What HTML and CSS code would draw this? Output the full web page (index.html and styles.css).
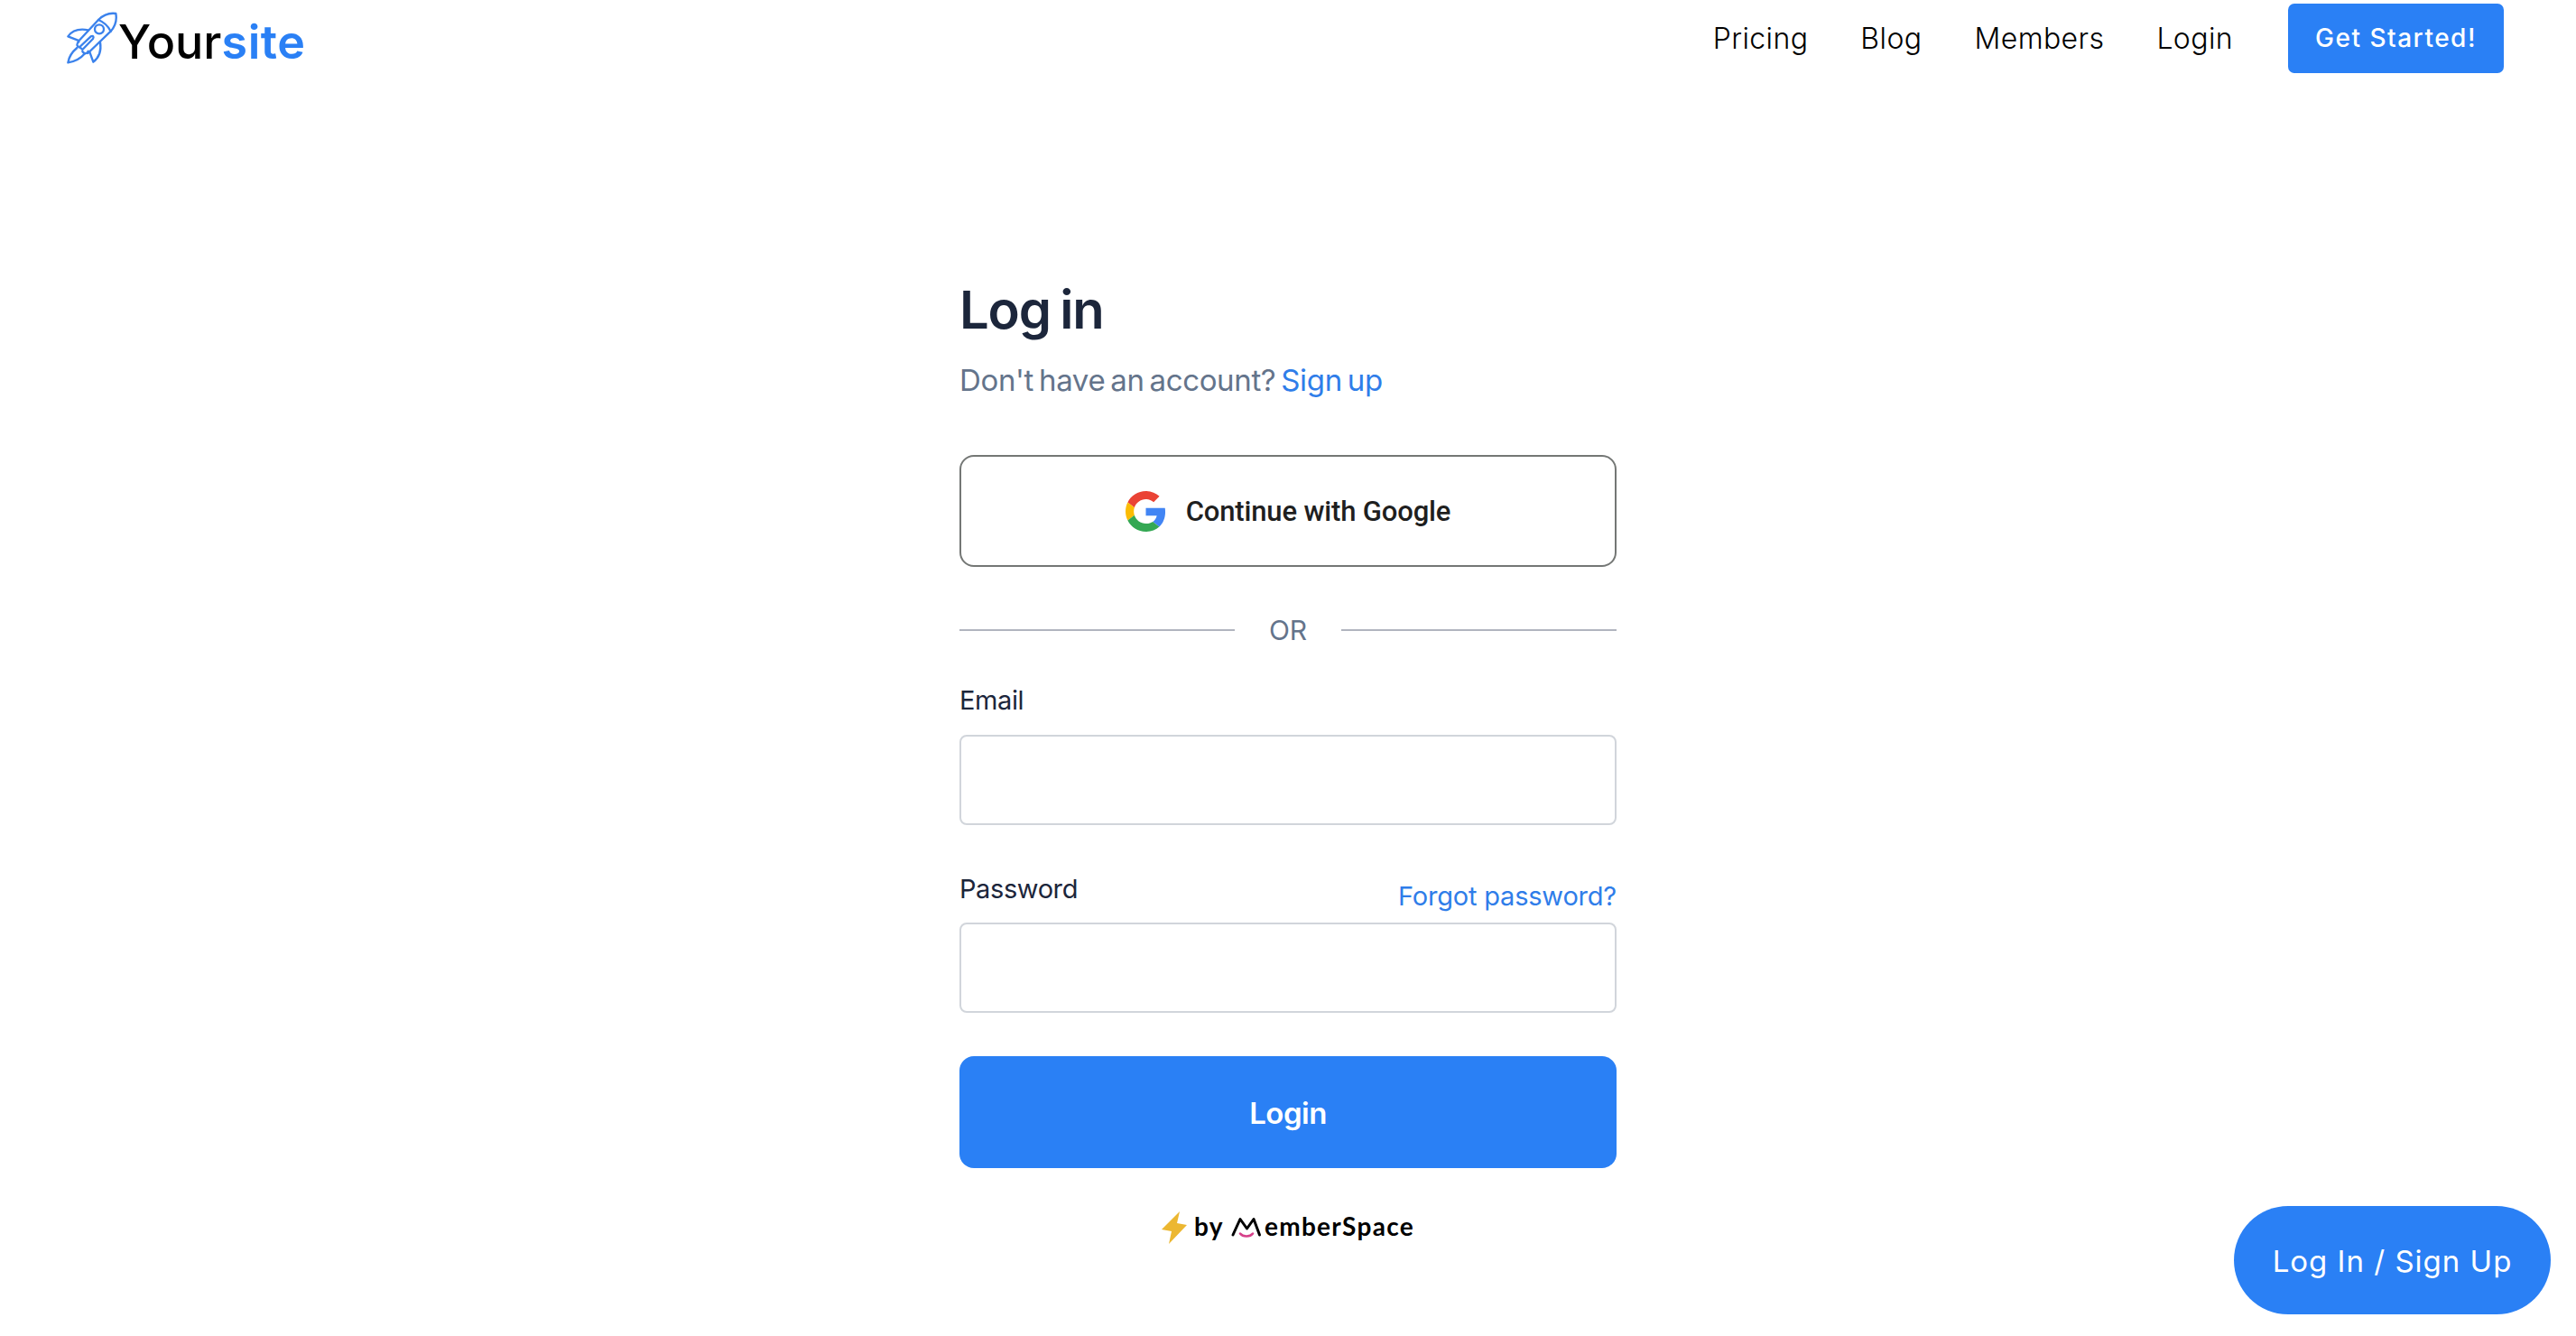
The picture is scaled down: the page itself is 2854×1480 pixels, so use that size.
FILE: index.html
```html
<!DOCTYPE html>
<html lang="en">
<head>
  <meta charset="UTF-8" />
  <meta name="viewport" content="width=device-width, initial-scale=1.0"/>
  <title>Log in | Yoursite</title>
  <link rel="stylesheet" href="styles.css">
</head>
<body>

  <header>
    <a class="logo" href="#">
      <svg class="rocket" viewBox="40 36 172 180" fill="none" stroke="#3b82ec" stroke-width="7" stroke-linecap="round" stroke-linejoin="round">
        <path d="M80 138L147 66C162 51 184 42 205 45C209 66 203 87 188 104L112 177" />
        <path d="M147 66C164 73 179 86 188 104" />
        <circle cx="150" cy="97" r="15" />
        <path d="M113 100C86 95 60 101 46 121L79 134" />
        <path d="M153 140C157 166 151 190 130 206L118 173" />
        <path d="M76 159C58 174 49 189 46 208C68 205 87 196 102 178" />
        <path d="M82 139C73 145 74 154 85 158M113 170C108 180 100 180 94 171" />
        <path d="M85 156L122 121C129 117 133 122 129 129L94 165Z" />
      </svg>
      <span class="logo-text">Your<span>site</span></span>
    </a>
    <nav>
      <a href="#">Pricing</a>
      <a href="#">Blog</a>
      <a href="#">Members</a>
      <a href="#">Login</a>
      <a class="cta" href="#">Get Started!</a>
    </nav>
  </header>

  <main>
    <h1>Log in</h1>
    <p class="subtitle">Don't have an account? <a href="#">Sign up</a></p>

    <button class="google-btn" type="button">
      <svg viewBox="0 0 48 48">
        <path fill="#EA4335" d="M24 9.5c3.54 0 6.71 1.22 9.21 3.6l6.85-6.85C35.9 2.38 30.47 0 24 0 14.62 0 6.51 5.38 2.56 13.22l7.98 6.19C12.43 13.72 17.74 9.5 24 9.5z" />
        <path fill="#4285F4" d="M46.98 24.55c0-1.57-.15-3.09-.38-4.55H24v9.02h12.94c-.58 2.96-2.26 5.48-4.78 7.18l7.73 6c4.51-4.18 7.09-10.36 7.09-17.65z" />
        <path fill="#FBBC05" d="M10.53 28.59c-.48-1.45-.76-2.99-.76-4.59s.27-3.14.76-4.59l-7.98-6.19C.92 16.46 0 20.12 0 24c0 3.88.92 7.54 2.56 10.78l7.97-6.19z" />
        <path fill="#34A853" d="M24 48c6.48 0 11.93-2.13 15.89-5.81l-7.73-6c-2.15 1.45-4.92 2.3-8.16 2.3-6.26 0-11.57-4.22-13.47-9.91l-7.98 6.19C6.51 42.62 14.62 48 24 48z" />
      </svg>
      <span>Continue with Google</span>
    </button>

    <div class="divider"><span>OR</span></div>

    <form>
      <div class="label-row">
        <label for="email">Email</label>
      </div>
      <input type="email" id="email" />

      <div class="label-row password-row">
        <label for="password">Password</label>
        <a href="#">Forgot password?</a>
      </div>
      <input type="password" id="password" />

      <button class="login-btn" type="button">Login</button>
    </form>

    <div class="powered">
      <svg class="bolt" viewBox="0 0 28 36">
        <path fill="#ecb731" d="M20 0L0 20L11 22L8 36L28 15L17 13Z" />
      </svg>
      <span class="by">by</span>
      <svg class="m-mark" viewBox="0 0 34 24" fill="none" stroke-linecap="round" stroke-linejoin="round">
        <path stroke="#000" stroke-width="3" d="M2 20L10 2.500L17.500 13L25 2.500L31.500 20" />
        <path stroke="#d6408a" stroke-width="2.600" d="M10 18.500C13 22.500 21 22.500 24 18.500" />
      </svg>
      <span class="brand">emberSpace</span>
    </div>
  </main>

  <a class="floating-btn" href="#">Log In / Sign Up</a>

</body>
</html>
```
FILE: styles.css
```css
* {
  margin: 0;
  padding: 0;
  box-sizing: border-box;
}

body {
  font-family: 'Inter', sans-serif;
  background-color: #fff;
  color: #1c263b;
  min-height: 1480px;
}

a {
  color: #2f7de9;
  text-decoration: none;
}

header {
  display: flex;
  justify-content: space-between;
  align-items: flex-start;
  height: 86px;
  padding: 4px 80px 0 73px;
}

.logo {
  display: flex;
  padding-top: 8px;
}

.rocket {
  width: 58px;
  height: 60px;
}

.logo-text {
  font-size: 52px;
  line-height: 70px;
  font-weight: 500;
  letter-spacing: 0;
  color: #000;
}

.logo-text span {
  color: #2a80f5;
  font-weight: 600;
  letter-spacing: 0.6px;
}

nav {
  display: flex;
  align-items: center;
}

nav a {
  margin-right: 58px;
  font-size: 32px;
  line-height: 77px;
  font-weight: 300;
  letter-spacing: 0.4px;
  color: #000;
}

nav .cta {
  width: 239px;
  height: 77px;
  margin: 0 0 0 3px;
  border-radius: 7px;
  background-color: #2a80f5;
  color: #fff;
  font-size: 28px;
  line-height: 77px;
  font-weight: 500;
  letter-spacing: 1.5px;
  text-align: center;
}

main {
  width: 728px;
  margin: 227px auto 0;
}

h1 {
  font-size: 58px;
  line-height: 60px;
  font-weight: 600;
  letter-spacing: -1.2px;
  word-spacing: -3px;
}

.subtitle {
  margin-top: 28px;
  font-size: 33px;
  line-height: 40px;
  letter-spacing: -0.35px;
  word-spacing: -3px;
  color: #64748b;
}

.google-btn {
  display: flex;
  align-items: center;
  justify-content: center;
  gap: 22px;
  width: 100%;
  height: 124px;
  margin-top: 63px;
  border: 2px solid #747775;
  border-radius: 16px;
  background: #fff;
  color: #1f1f1f;
  font-family: 'Roboto', sans-serif;
  font-size: 31px;
  font-weight: 500;
  letter-spacing: -0.15px;
}

.google-btn svg {
  width: 45px;
  height: 45px;
}

.divider {
  display: flex;
  align-items: center;
  margin-top: 52px;
  font-size: 30px;
  line-height: 36px;
  color: #64748b;
}

.divider span {
  width: 118px;
  text-align: center;
}

.divider::before,
.divider::after {
  content: "";
  flex: 1;
  height: 2px;
  background: #b1b5bf;
}

.label-row {
  display: flex;
  justify-content: space-between;
  margin-top: 42px;
  margin-bottom: 20px;
  font-size: 29px;
  line-height: 36px;
  letter-spacing: -0.4px;
}

.password-row {
  height: 44px;
  margin-top: 53px;
  margin-bottom: 11px;
}

.password-row a {
  align-self: flex-end;
  letter-spacing: -0.2px;
}

input {
  display: block;
  width: 100%;
  height: 100px;
  padding: 0 24px;
  border: 2px solid #d1d5db;
  border-radius: 8px;
  background: #fff;
  font-size: 29px;
}

.login-btn {
  display: block;
  width: 100%;
  height: 124px;
  margin-top: 48px;
  padding-top: 2px;
  border: none;
  border-radius: 16px;
  background-color: #2a80f5;
  color: #fff;
  font-family: inherit;
  font-size: 33px;
  font-weight: 600;
  letter-spacing: -0.5px;
}

.powered {
  display: flex;
  align-items: center;
  justify-content: center;
  height: 36px;
  margin-top: 48px;
  font-family: 'Lato', sans-serif;
  font-size: 28px;
  line-height: 34px;
  font-weight: 700;
  letter-spacing: 1.3px;
  color: #000;
}

.bolt {
  width: 28px;
  height: 36px;
  margin-right: 8px;
}

.by,
.brand {
  padding-bottom: 4px;
}

.m-mark {
  width: 34px;
  height: 24px;
  margin: 0 3px 0 8px;
}

.floating-btn {
  position: fixed;
  right: 28px;
  bottom: 24px;
  width: 351px;
  height: 120px;
  border-radius: 60px;
  background-color: #2a80f5;
  color: #fff;
  font-size: 33px;
  line-height: 122px;
  letter-spacing: 1px;
  text-align: center;
}
```
